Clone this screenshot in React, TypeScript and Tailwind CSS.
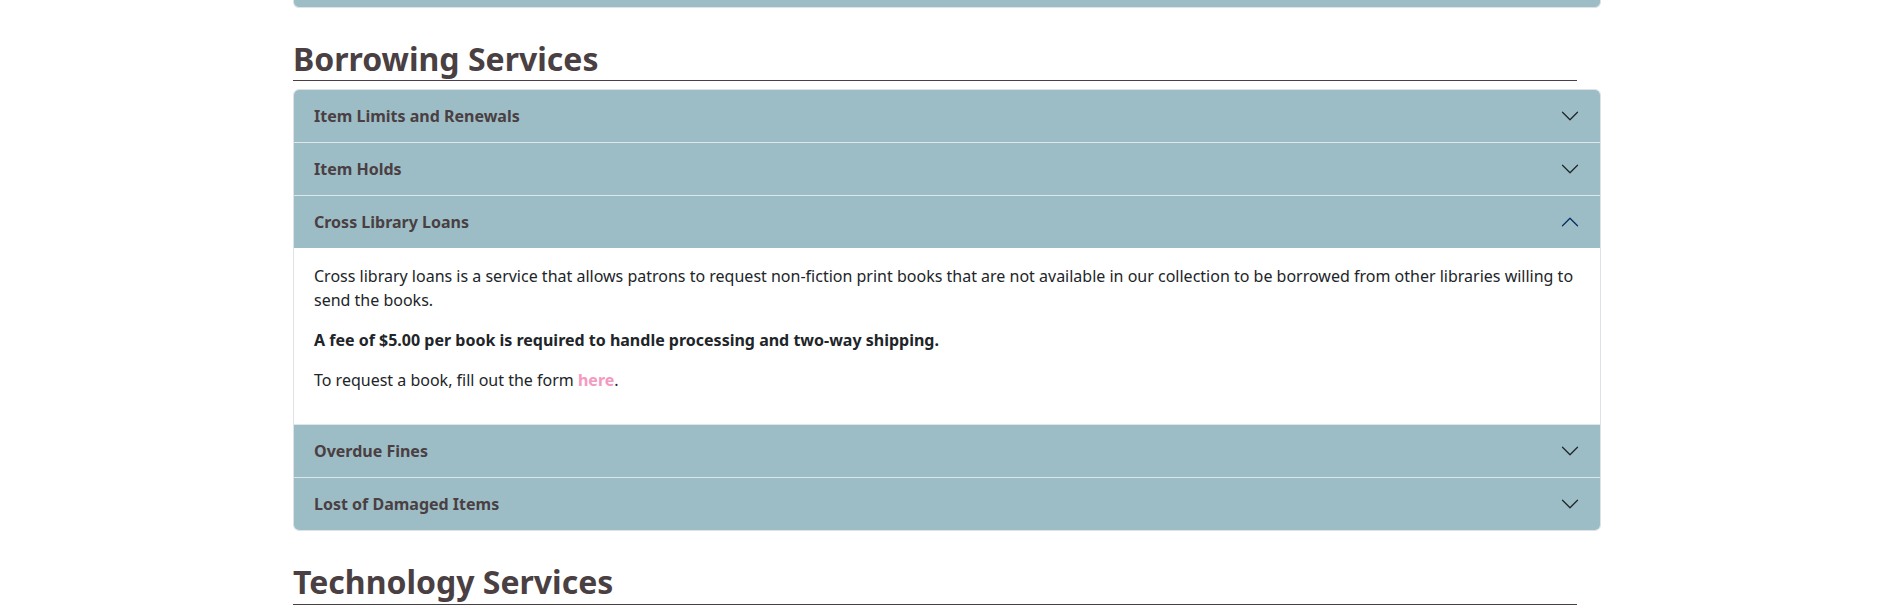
import { useState } from 'react';

const items = [
  { id: 'limits', title: 'Item Limits and Renewals' },
  { id: 'holds', title: 'Item Holds' },
  { id: 'cross', title: 'Cross Library Loans' },
  { id: 'fines', title: 'Overdue Fines' },
  { id: 'lost', title: 'Lost of Damaged Items' },
];

function Chevron({ open }: { open: boolean }) {
  return (
    <svg
      className={open ? 'w-5 h-5 shrink-0 rotate-180' : 'w-5 h-5 shrink-0'}
      viewBox="0 0 16 16"
      fill="none"
      stroke={open ? '#052c65' : '#212529'}
      strokeLinecap="round"
      strokeLinejoin="round"
    >
      <path d="M2 5L8 11L14 5" />
    </svg>
  );
}

function CrossLibraryBody() {
  return (
    <div className="px-5 py-4 text-[16px] leading-6 text-[#212529]">
      <p className="mb-4">
        Cross library loans is a service that allows patrons to request non-fiction print books that are not
        available in our collection to be borrowed from other libraries willing to send the books.
      </p>
      <p className="mb-4 font-bold">A fee of $5.00 per book is required to handle processing and two-way shipping.</p>
      <p className="mb-4">
        To request a book, fill out the form{' '}
        <a href="#" className="font-bold text-[#f49ac1] no-underline">
          here
        </a>
        .
      </p>
    </div>
  );
}

export default function App() {
  const [open, setOpen] = useState<string | null>('cross');

  return (
    <div className="min-h-screen bg-white font-['Noto_Sans',sans-serif] text-[#4a3f42]">
      <div className="w-[1308px] ml-[293px]">
        {/* tail of the previous accordion */}
        <div className="h-2 bg-[#9dbdc6] rounded-b-md border border-t-0 border-[#dee2e6]" />

        <h2 className="mt-8 mr-6 text-[32px] leading-[1.2] font-bold border-b border-[#4a3f42] pb-[2px] mb-2">
          Borrowing Services
        </h2>

        <div className="rounded-md border border-[#dee2e6] overflow-hidden">
          {items.map((item, i) => {
            const isOpen = open === item.id;
            return (
              <div key={item.id} className={i > 0 ? 'border-t border-[#dde6e9]' : ''}>
                <button
                  type="button"
                  onClick={() => setOpen(isOpen ? null : item.id)}
                  className="w-full flex items-center justify-between px-5 h-[52px] bg-[#9dbdc6] text-left text-[16px] font-bold text-[#4a3f42]"
                >
                  <span>{item.title}</span>
                  <Chevron open={isOpen} />
                </button>
                {isOpen && item.id === 'cross' && <CrossLibraryBody />}
              </div>
            );
          })}
        </div>

        <h2 className="mt-8 mr-6 text-[32px] leading-[1.2] font-bold border-b border-[#4a3f42] pb-[2px] mb-2">
          Technology Services
        </h2>
        <div className="h-40" />
      </div>
    </div>
  );
}
